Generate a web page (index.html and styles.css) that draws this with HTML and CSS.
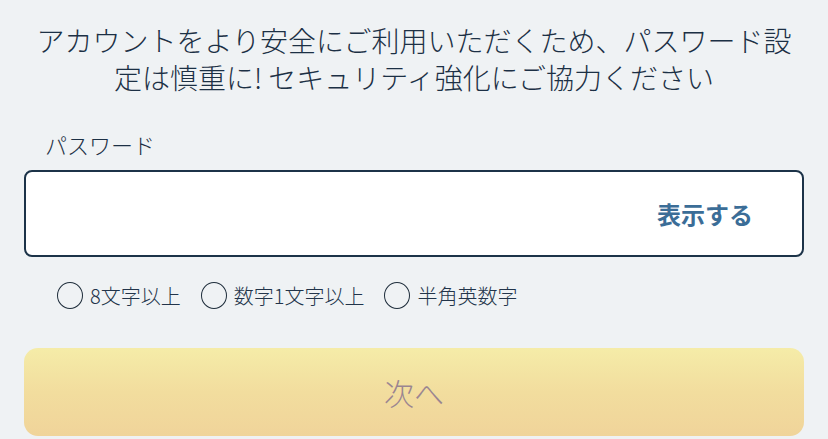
FILE: index.html
```html
<!DOCTYPE html>
<html lang="ja">
<head>
<meta charset="utf-8">
<title>パスワード設定</title>
<link rel="stylesheet" href="styles.css">
</head>
<body>
<main class="page">
  <h1 class="lead">アカウントをより安全にご利用いただくため、パスワード設定は慎重に! セキュリティ強化にご協力ください</h1>
  <label class="field-label" for="pw">パスワード</label>
  <div class="field">
    <input id="pw" class="field-input" type="password">
    <span class="toggle">表示する</span>
  </div>
  <ul class="rules">
    <li class="rule"><span class="dot"></span>8文字以上</li>
    <li class="rule"><span class="dot"></span>数字1文字以上</li>
    <li class="rule"><span class="dot"></span>半角英数字</li>
  </ul>
  <button class="next" type="button">次へ</button>
</main>
</body>
</html>
```
FILE: styles.css
```css
html, body {
  margin: 0;
  padding: 0;
  background: #eff2f4;
}
body {
  font-family: "Noto Sans CJK JP", "Noto Sans", sans-serif;
  color: #1f3246;
}
.page {
  padding: 22px 24px 0;
  display: flex;
  flex-direction: column;
}
.lead {
  margin: 0;
  font-size: 28px;
  line-height: 37px;
  font-weight: 300;
  text-align: center;
  color: #1c3045;
}
.field-label {
  margin-top: 33px;
  padding-left: 21px;
  font-size: 22px;
  line-height: 30px;
  font-weight: 300;
  color: #1c3045;
}
.field {
  margin-top: 11px;
  height: 87px;
  box-sizing: border-box;
  border: 2px solid #1c3348;
  border-radius: 8px;
  background: #ffffff;
  display: flex;
  align-items: center;
  padding: 0 49px 0 20px;
}
.field-input {
  flex: 1;
  border: 0;
  outline: 0;
  background: transparent;
  font-size: 22px;
  min-width: 0;
}
.toggle {
  font-size: 24px;
  font-weight: 700;
  color: #3b6d97;
  line-height: 1;
}
.rules {
  list-style: none;
  margin: 25px 0 0;
  padding: 0 0 0 33px;
  display: flex;
  gap: 20px;
}
.rule {
  display: flex;
  align-items: center;
  gap: 7px;
  font-size: 20px;
  line-height: 26px;
  font-weight: 300;
  color: #22344a;
}
.dot {
  width: 26px;
  height: 27px;
  box-sizing: border-box;
  border: 1.6px solid #1f2e3c;
  border-radius: 50%;
  background: transparent;
}
.next {
  margin-top: 39px;
  height: 88px;
  border: 0;
  border-radius: 14px;
  background: linear-gradient(180deg, #f5eca8 0%, #f2dd9e 50%, #f0d49a 100%);
  font-family: "Noto Sans CJK JP", "Noto Sans", sans-serif;
  font-size: 30px;
  color: #9a8591;
  font-weight: 300;
}
```
